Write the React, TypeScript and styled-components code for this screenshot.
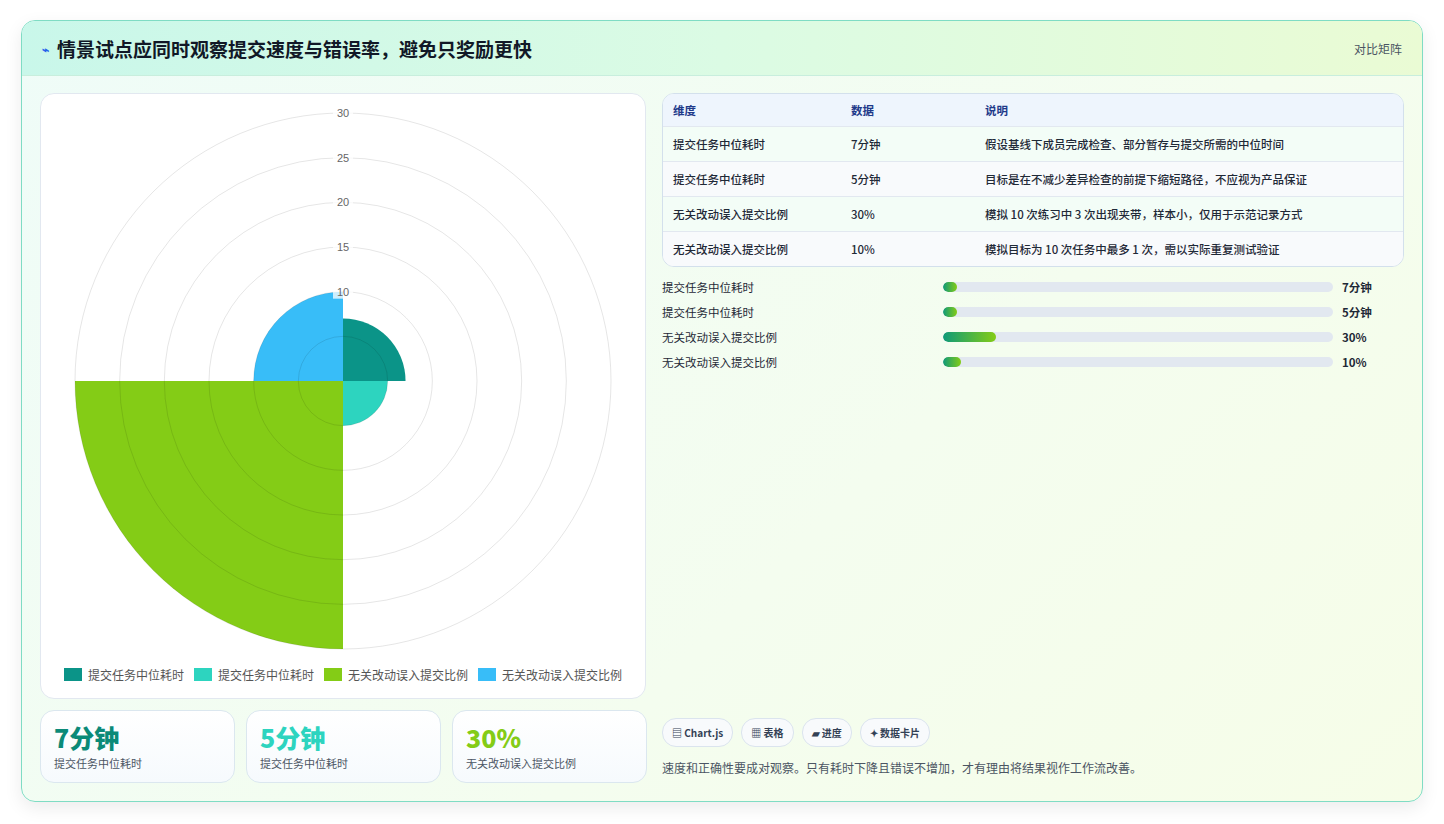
import React from "react";
import styled, { createGlobalStyle } from "styled-components";

const G = createGlobalStyle`
  html,body{margin:0;padding:0;background:#fff;}
  body{font-family:"Noto Sans CJK SC","Noto Sans",sans-serif;}
`;
const Page = styled.div`padding:20px 21px 21px 21px;box-sizing:border-box;width:1444px;height:824px;`;
const Card = styled.div`
  height:782px;box-sizing:border-box;border:1px solid #7fdcc4;border-radius:14px;overflow:hidden;
  background:linear-gradient(135deg,#effcf8 0%,#f4fdef 60%,#f6fde8 100%);
  box-shadow:0 6px 18px rgba(0,0,0,0.08);display:flex;flex-direction:column;
`;
const Header = styled.div`
  height:54px;flex:none;display:flex;align-items:center;justify-content:space-between;padding:0 20px;
  background:linear-gradient(90deg,#c9f7ea 0%,#dbfbe4 50%,#eafbd4 100%);border-bottom:1px solid #c8eedd;
`;
const Title = styled.h1`margin:0;font-size:19px;font-weight:700;color:#111827;display:flex;align-items:center;gap:8px;`;
const Icon = styled.span`font-size:12px;color:#2563eb;`;
const HRight = styled.span`font-size:12px;color:#4b5563;`;
const Body = styled.div`flex:1;display:grid;grid-template-columns:606px 1fr;gap:16px;padding:17px 18px 18px 18px;`;
const Left = styled.div`display:flex;flex-direction:column;gap:11px;`;
const ChartCard = styled.div`height:606px;box-sizing:border-box;background:#fff;border:1px solid #e2e8f0;border-radius:14px;display:flex;flex-direction:column;`;
const Legend = styled.div`display:flex;justify-content:center;gap:10px;margin-top:10px;font-size:12px;color:#555;`;
const LItem = styled.span`display:flex;align-items:center;gap:6px;`;
const Sw = styled.i<{c:string}>`width:18px;height:13px;background:${p=>p.c};display:inline-block;`;
const Stats = styled.div`display:grid;grid-template-columns:repeat(3,195px);gap:11px;`;
const Stat = styled.div`height:73px;box-sizing:border-box;border:1px solid #dbe7ef;border-radius:14px;background:linear-gradient(180deg,#fff,#f6fafd);padding:10px 13px;`;
const SVal = styled.div<{c:string}>`font-size:25px;font-weight:800;color:${p=>p.c};line-height:32px;`;
const SLab = styled.div`font-size:11px;color:#4b5563;margin-top:2px;`;
const Right = styled.div`display:flex;flex-direction:column;`;
const Table = styled.div`border:1px solid #d3e0ec;border-radius:12px;overflow:hidden;background:#fff;`;
const Row = styled.div<{h?:boolean;alt?:boolean}>`
  display:grid;grid-template-columns:178px 134px 1fr;height:${p=>p.h?32:34}px;align-items:center;padding:0 10px;font-size:11.5px;
  color:${p=>p.h?"#1e3a8a":"#1f2937"};font-weight:${p=>p.h?600:500};
  background:${p=>p.h?"#eef5fd":p.alt?"#f8fafc":"#f3fdf7"};border-top:${p=>p.h?"none":"1px solid #e2e8f0"};
`;
const Bars = styled.div`display:flex;flex-direction:column;gap:9px;margin-top:12px;`;
const BarRow = styled.div`display:grid;grid-template-columns:281px 390px 1fr;align-items:center;font-size:11.5px;color:#1f2937;height:16px;gap:0;`;
const Track = styled.div`height:10px;border-radius:5px;background:#e2e8f0;overflow:hidden;`;
const Fill = styled.div`height:100%;border-radius:5px;background:linear-gradient(90deg,#0f9a78,#84cc16);`;
const BVal = styled.span`font-weight:700;padding-left:9px;`;
const Spacer = styled.div`flex:1;`;
const Chips = styled.div`display:flex;gap:8px;`;
const Chip = styled.span`font-size:10px;font-weight:600;color:#334155;border:1px solid #dbe4ee;background:#f8fafc;border-radius:14px;padding:6px 9px;`;
const Note = styled.p`margin:12px 0 7px;font-size:12px;color:#4b5563;`;

const segs=[{v:7,c:"#0b9488"},{v:5,c:"#2dd4bf"},{v:30,c:"#84cc16"},{v:10,c:"#38bdf8"}];
const K=268/30;
function arc(cx:number,cy:number,r:number,a0:number,a1:number){
  const p=(a:number)=>[cx+r*Math.cos(a),cy+r*Math.sin(a)];
  const [x0,y0]=p(a0),[x1,y1]=p(a1);
  return `M${cx},${cy}L${x0},${y0}A${r},${r} 0 0 1 ${x1},${y1}Z`;
}
const Polar=()=>{const cx=302,cy=287;return(
  <svg width="604" height="562" style={{display:"block"}}>
    {segs.map((s,i)=><path key={i} d={arc(cx,cy,s.v*K,-Math.PI/2+i*Math.PI/2,i*Math.PI/2)} fill={s.c}/>)}
    {[5,10,15,20,25,30].map(v=><circle key={v} cx={cx} cy={cy} r={v*K} fill="none" stroke="rgba(0,0,0,0.1)"/>)}
    {[10,15,20,25,30].map(v=><g key={v}><rect x={cx-10} y={cy-v*K-7} width="20" height="14" fill="rgba(255,255,255,0.75)"/><text x={cx} y={cy-v*K+4} textAnchor="middle" fontSize="11" fill="#666" fontFamily="Liberation Sans,sans-serif">{v}</text></g>)}
  </svg>)};

const rows=[["提交任务中位耗时","7分钟","假设基线下成员完成检查、部分暂存与提交所需的中位时间"],["提交任务中位耗时","5分钟","目标是在不减少差异检查的前提下缩短路径，不应视为产品保证"],["无关改动误入提交比例","30%","模拟 10 次练习中 3 次出现夹带，样本小，仅用于示范记录方式"],["无关改动误入提交比例","10%","模拟目标为 10 次任务中最多 1 次，需以实际重复测试验证"]];
const bars:[string,string,number][]=[["提交任务中位耗时","7分钟",3.5],["提交任务中位耗时","5分钟",3.5],["无关改动误入提交比例","30%",13.5],["无关改动误入提交比例","10%",4.5]];

export default function App(){return(<><G/><Page><Card>
  <Header><Title><Icon>⌁</Icon>情景试点应同时观察提交速度与错误率，避免只奖励更快</Title><HRight>对比矩阵</HRight></Header>
  <Body>
    <Left>
      <ChartCard><Polar/><Legend>{[["提交任务中位耗时","#0b9488"],["提交任务中位耗时","#2dd4bf"],["无关改动误入提交比例","#84cc16"],["无关改动误入提交比例","#38bdf8"]].map(([t,c],i)=><LItem key={i}><Sw c={c}/>{t}</LItem>)}</Legend></ChartCard>
      <Stats>
        <Stat><SVal c="#0b8a78">7分钟</SVal><SLab>提交任务中位耗时</SLab></Stat>
        <Stat><SVal c="#2dd4bf">5分钟</SVal><SLab>提交任务中位耗时</SLab></Stat>
        <Stat><SVal c="#84cc16">30%</SVal><SLab>无关改动误入提交比例</SLab></Stat>
      </Stats>
    </Left>
    <Right>
      <Table><Row h><span>维度</span><span>数据</span><span>说明</span></Row>
        {rows.map((r,i)=><Row key={i} alt={i%2===1}><span>{r[0]}</span><span>{r[1]}</span><span>{r[2]}</span></Row>)}
      </Table>
      <Bars>{bars.map((b,i)=><BarRow key={i}><span>{b[0]}</span><Track><Fill style={{width:b[2]+"%"}}/></Track><BVal>{b[1]}</BVal></BarRow>)}</Bars>
      <Spacer/>
      <Chips><Chip>▤ Chart.js</Chip><Chip>▦ 表格</Chip><Chip>▰ 进度</Chip><Chip>✦ 数据卡片</Chip></Chips>
      <Note>速度和正确性要成对观察。只有耗时下降且错误不增加，才有理由将结果视作工作流改善。</Note>
    </Right>
  </Body>
</Card></Page></>)}
